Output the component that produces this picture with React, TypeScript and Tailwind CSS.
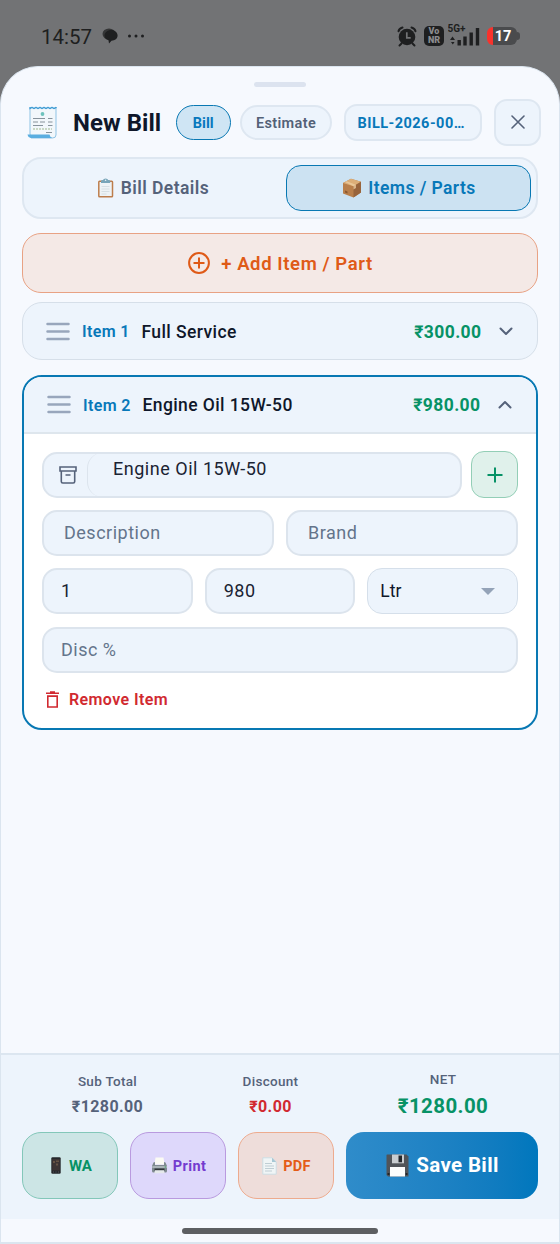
import type { ReactNode } from "react";

const ReceiptIcon = () => (
  <svg width="30" height="33" viewBox="0 0 30 33" className="shrink-0">
    <path d="M3 2.500 5 1 7 2.500 9 1 11 2.500 13 1 15 2.500 17 1 19 2.500 21 1 23 2.500 25 1 27 2.500 29 1V29Q29 32 25.500 32H4L3 28Z" fill="#f2f7fb" stroke="#8fc3e4" strokeWidth="1" />
    <path d="M3 1v1.500l2-1 2 1 2-1 2 1 2-1 2 1 2-1 2 1 2-1 2 1 2-1 2 1 2-1V1" fill="none" stroke="#3d9bd3" strokeWidth="1.300" />
    <path d="M.5 28.500H22.500Q23 31.500 25.500 32H4Q1 31.500.5 28.500Z" fill="#5aaee0" />
    <circle cx="15.500" cy="8" r="1.900" fill="#6ec3bd" />
    <path d="M6 12.500h12M21 12.500h4.500M6 16h5M13 16h5M21 16h4.500M6 19.500h10M21 19.500h4.500M19 26.500h6" stroke="#87939c" strokeWidth="1.100" />
    <path d="M6 23h19" stroke="#9fb98d" strokeWidth="1" strokeDasharray="2 1" />
  </svg>
);

const ClipboardIcon = () => (
  <svg width="17" height="20" viewBox="0 0 17 20" className="shrink-0">
    <rect x="1.800" y="3.200" width="13.700" height="15.500" rx=".8" fill="#eef3f6" stroke="#bd7d4c" strokeWidth="1.500" />
    <path d="M4 5V3Q4 2 6 2Q6.500.4 8.600.4T11.200 2Q13.200 2 13.200 3V5Z" fill="#78a5b9" />
    <circle cx="8.600" cy="2.300" r=".8" fill="#e9f2f6" />
    <path d="M4.500 8.500h8M4.500 11h8M4.500 13.500h8M4.500 16h5" stroke="#cfd9df" strokeWidth=".8" />
  </svg>
);

const BoxIcon = () => (
  <svg width="20" height="20" viewBox="0 0 20 20" className="shrink-0">
    <path d="M1 5 9 .8 19 3.800V14.500L11.500 19.500 1 15.500Z" fill="#b97f4b" />
    <path d="M1 5 9 .8 19 3.800 11.500 8.300Z" fill="#dcae78" />
    <path d="M11.500 8.300 19 3.800V14.500L11.500 19.500Z" fill="#98643c" />
    <path d="M4.500 3.200 14 6.700V10l-2.500 1.500V8.300L3 4Z" fill="#edcfa3" opacity=".75" />
    <path d="m3 12.500 2.500 1v2l-2.500-1Z" fill="#89572f" />
  </svg>
);

const PhoneIcon = () => (
  <svg width="10" height="17" viewBox="0 0 10 17" className="shrink-0">
    <rect x=".3" y=".3" width="9.400" height="16.400" rx="1.200" fill="#25272b" />
    <rect x="1.200" y="2" width="7.600" height="11.500" fill="#3d3434" />
    <path d="M2 4h2v2H2zM5 3.500h3v1.500H5zM5 6.500h2v2H5z" fill="#665344" />
    <path d="M2 15h1M4.500 15h1M7 15h1" stroke="#62666b" strokeWidth=".8" />
  </svg>
);

const PrinterIcon = () => (
  <svg width="17" height="17" viewBox="0 0 17 17" className="shrink-0">
    <path d="M4.500.5h8l1 7h-10Z" fill="#fbfbf4" />
    <path d="M2.500 5.500 4 5v3h9V5l1.500.5L16 9v5q0 1.500-1.500 1.500h-12Q1 15.500 1 14V9Z" fill="#7f8a90" />
    <path d="M1.200 9h14.600v2H1.200Z" fill="#a9b3b7" />
    <path d="M3.500 11.500h10v2.200h-10Z" fill="#303539" />
    <path d="M4 13.200h9l.7 3H3.300Z" fill="#e5e9eb" />
    <circle cx="14.300" cy="10" r=".7" fill="#45a36b" />
  </svg>
);

const PageIcon = () => (
  <svg width="15" height="18" viewBox="0 0 15 18" className="shrink-0">
    <path d="M.8.800H10L14.200 5V17.200H.8Z" fill="#f0f5f6" stroke="#c5dce4" strokeWidth=".8" />
    <path d="M10 .8V5h4.200Z" fill="#a7c7d4" />
    <path d="M3 6.500h7M3 9h9M3 11.500h9M3 14h7" stroke="#b9c9d0" strokeWidth=".9" />
  </svg>
);

const FloppyIcon = () => (
  <svg width="23" height="23" viewBox="0 0 23 23" className="shrink-0">
    <path d="M1 .5h19.500L22.500 2.500V22.500H2L.5 21V1Z" fill="#505459" />
    <path d="M6 .5h12v8.800H6Z" fill="#c9cdd0" />
    <path d="M12.500 1.500H16v6.800h-3.500Z" fill="#23272c" />
    <path d="M4 13h15v9.500H4Z" fill="#fcfdfd" />
    <path d="M1.500 19h2v2h-2zM19.700 19h1.800v2h-1.800z" fill="#222529" />
  </svg>
);

const StatusBar = () => (
  <div className="flex h-[66px] items-center justify-between pt-1.5 pl-[41px] pr-10 text-[#1e1f20]">
    <div className="flex items-center">
      <span className="w-[51px] pt-0.5 text-[20.5px] whitespace-nowrap">14:57</span>
      <svg width="17" height="16" viewBox="0 0 17 16" className="ml-2.5">
        <ellipse cx="7" cy="6" rx="6.500" ry="5.500" fill="#343536" />
        <path d="M9.300 2C13 2 15.600 4.500 15.600 7.500S13 12.500 9.500 12.800L7 15.500 6.500 12.300C4 11.500 2.500 9.700 2.500 7.500 2.500 4.500 5.500 2 9.300 2Z" fill="#1e1f20" />
      </svg>
      <svg width="18" height="4" viewBox="0 0 18 4" className="ml-2">
        <circle cx="2.500" cy="2" r="1.500" fill="currentColor" />
        <circle cx="9" cy="2" r="1.500" fill="currentColor" />
        <circle cx="15.500" cy="2" r="1.500" fill="currentColor" />
      </svg>
    </div>
    <div className="flex items-center">
      <svg width="20" height="21" viewBox="0 0 19 21">
        <circle cx="9.500" cy="11" r="8.300" fill="currentColor" />
        <path d="M1 5.300Q1.500 2.500 5 1.500M18 5.300Q17.500 2.500 14 1.500M4 17.500l-2 2M15 17.500l2 2" stroke="currentColor" strokeWidth="2" strokeLinecap="round" fill="none" />
        <path d="M9.300 6.200v5.600h3.900" stroke="#727375" strokeWidth="1.700" fill="none" />
      </svg>
      <div className="ml-[7px] flex h-5 w-5 flex-col items-center justify-center rounded-[5px] bg-[#1e1f20] text-[9px] leading-[9px] font-black text-[#8b8c8e]">
        <span>Vo</span>
        <span>NR</span>
      </div>
      <svg width="33" height="23" viewBox="0 0 33 23" className="mb-0.5 ml-1">
        <text x="-.5" y="8" fontSize="10" fontWeight="700" fill="currentColor">5G+</text>
        <path d="M9.500 16h3.400v5.500H9.500zM15.300 12.500h3.400v9h-3.400zM21.500 8.500h3.400v13h-3.400zM27.800 4h3.400v17.500h-3.400zM2 16l2.500-3.500L7 16zM3 18h3.500l-1.700 2.500z" fill="currentColor" />
      </svg>
      <div className="ml-1.5 flex items-center">
        <div className="flex h-[18px] w-[30px] items-center justify-center overflow-hidden rounded-[6px] bg-linear-to-r from-[#f9322c] from-20% to-[#4a4b4d] to-20% pt-px pl-0.5 text-[14.500px] font-bold text-white">
          17
        </div>
        <div className="h-2 w-[3px] rounded-r-full bg-[#4a4b4d]" />
      </div>
    </div>
  </div>
);

const Header = () => (
  <div className="mt-[11px] flex h-12 items-center pr-[18px] pl-[26px]">
    <ReceiptIcon />
    <h1 className="ml-4 w-[89px] pt-0.5 text-[24px] font-bold tracking-[0.050px] whitespace-nowrap text-[#0f172a]">
      New Bill
    </h1>
    <button className="mt-px ml-[14px] h-[35px] w-[55px] rounded-full border-[1.500px] border-[#0878b3] bg-[#cfe5f4] pt-0.5 text-[14.500px] font-bold text-[#0878bd]">
      Bill
    </button>
    <button className="mt-px ml-[9px] h-[35px] w-[93px] rounded-full border-2 border-[#dee7f1] bg-[#edf4fc] pt-0.5 text-[14.500px] font-semibold tracking-[0.350px] text-[#536177]">
      Estimate
    </button>
    <div className="mt-px ml-3 flex h-[37px] w-[138px] items-center rounded-[13px] border-2 border-[#dee7f1] bg-[#edf4fc] pt-0.5 pl-[11px] text-[14.500px] font-bold tracking-[0.480px] whitespace-nowrap text-[#0878b9]">
      BILL-2026-00…
    </div>
    <button className="ml-3 flex h-[47px] w-[47px] items-center justify-center rounded-[13px] border-2 border-[#dee7f1] bg-[#edf4fc]">
      <svg width="14" height="14" viewBox="0 0 14 14" stroke="#55627a" strokeWidth="1.600" strokeLinecap="round">
        <path d="m1 1 12 12M13 1 1 13" />
      </svg>
    </button>
  </div>
);

const Tabs = () => (
  <div className="mx-[21px] mt-[11px] flex h-[62px] rounded-[19px] border-2 border-[#dee7f1] bg-[#edf4fc] p-[6px] pr-[5px]">
    <button className="mr-[10px] flex flex-1 items-center justify-center gap-[7px] text-[17.500px] font-semibold tracking-[0.420px] text-[#55627a]">
      <ClipboardIcon />
      <span className="pt-px">Bill Details</span>
    </button>
    <button className="flex h-[46px] w-[245px] items-center justify-center gap-[6px] rounded-[15px] border-[1.500px] border-[#0878b3] bg-[#cce2f2] pl-px text-[17.500px] font-semibold tracking-[0.420px] text-[#0878b9]">
      <BoxIcon />
      <span className="pt-px">Items / Parts</span>
    </button>
  </div>
);

type ItemHeaderProps = {
  label: string;
  name: string;
  price: string;
  open?: boolean;
};

const ItemHeader = ({ label, name, price, open }: ItemHeaderProps) => (
  <div className="flex h-full items-center px-[23px]">
    <svg width="24" height="19" viewBox="0 0 24 19" stroke="#98a6bc" strokeWidth="2.500" strokeLinecap="round">
      <path d="M1.500 2h21M1.500 9.500h21M1.500 17h21" />
    </svg>
    <span className="ml-3 w-[59.500px] pt-0.5 text-[16px] font-semibold tracking-[0.350px] whitespace-nowrap text-[#0878b9]">
      {label}
    </span>
    <span className="pt-0.5 text-[17.500px] font-medium tracking-[0.400px] whitespace-nowrap text-[#0f172a]">{name}</span>
    <span className="ml-auto pt-0.5 text-[17.500px] font-bold tracking-[0.400px] text-[#079266]">{price}</span>
    <svg
      width="14"
      height="9"
      viewBox="0 0 14 9"
      className={open ? "mr-px ml-[17.500px] rotate-180" : "mr-px ml-[17.500px]"}
      fill="none"
      stroke="#55627a"
      strokeWidth="2"
      strokeLinecap="round"
      strokeLinejoin="round"
    >
      <path d="m1.500 1.500 5.500 5.500 5.500-5.500" />
    </svg>
  </div>
);

const Field = ({ children, className }: { children: ReactNode; className?: string }) => (
  <div
    className={`flex h-[46px] items-center rounded-[15px] border-2 border-[#dce4ed] bg-[#edf4fc] pb-0.5 text-[18px] tracking-[0.500px] ${className ?? ""}`}
  >
    {children}
  </div>
);

const ItemForm = () => (
  <div className="px-[18px] pt-[17px]">
    <div className="flex gap-[9px]">
      <div className="mt-px flex h-[46px] flex-1 items-center rounded-[15px] border-2 border-[#dce4ed] bg-[#edf4fc]">
        <svg width="18" height="18" viewBox="0 0 18 18" className="ml-[15px]" fill="none" stroke="#55627a" strokeWidth="1.600">
          <path d="M1 1h16v4H1zM2.300 5v10.500q0 1.500 1.500 1.500h10.400q1.500 0 1.500-1.500V5M6.500 9h5" />
        </svg>
        <div className="ml-[10px] flex h-[44px] flex-1 rounded-[15px] border-l border-[#dce4ed] pt-0.5 pl-[25px] text-[18px] tracking-[0.520px] text-[#1a2333]">
          Engine Oil 15W-50
        </div>
      </div>
      <button className="flex h-[47px] w-[47px] items-center justify-center rounded-[13px] border-[1.500px] border-[#93ceb6] bg-[#e0f1eb]">
        <svg width="16" height="16" viewBox="0 0 16 16" stroke="#079266" strokeWidth="2">
          <path d="M8 .5v15M.5 8h15" />
        </svg>
      </button>
    </div>
    <div className="mt-3 grid grid-cols-2 gap-3 text-[#64748b]">
      <Field className="pl-[20px]">Description</Field>
      <Field className="pl-[20px]">Brand</Field>
    </div>
    <div className="mt-3 grid grid-cols-3 gap-3 text-[#1a2333]">
      <Field className="pl-[17px]">1</Field>
      <Field className="pl-[17px]">980</Field>
      <div className="flex h-[46px] items-center justify-between rounded-[15px] border-[1.500px] border-[#d5dfea] bg-[#edf4fc] pr-[22px] pl-[12px] text-[17.500px] text-[#0f172a]">
        Ltr
        <svg width="14" height="7" viewBox="0 0 14 7" fill="#94a3b8">
          <path d="M0 0h14L7 7z" />
        </svg>
      </div>
    </div>
    <Field className="mt-[13px] pl-[17px] text-[#64748b]">Disc %</Field>
    <button className="mt-[14px] ml-[4px] flex items-center gap-[10px] text-[16px] font-semibold tracking-[0.400px] text-[#d12930]">
      <svg width="13" height="17" viewBox="0 0 13 17" fill="none" stroke="currentColor" strokeWidth="1.600">
        <path d="M0 2.200h13M4 1h5M1.800 5.100h9.400V16H1.800z" />
      </svg>
      <span className="pt-px">Remove Item</span>
    </button>
  </div>
);

const Footer = () => (
  <footer className="h-[166px] border-t-2 border-[#dce6f0] bg-[#edf4fc] px-[21px] pt-[15px] text-center">
    <div className="flex h-[62px] text-[#55627a]">
      <div className="w-[171px] pt-px">
        <p className="text-[13.500px] leading-5 font-medium tracking-[0.300px]">Sub Total</p>
        <p className="mt-1 text-[16px] leading-6 font-bold tracking-[0.400px]">₹1280.00</p>
      </div>
      <div className="w-[155px] pt-px">
        <p className="text-[13.500px] leading-5 font-medium tracking-[0.300px]">Discount</p>
        <p className="mt-1 text-[16px] leading-6 font-bold tracking-[0.400px] text-[#d12930]">₹0.00</p>
      </div>
      <div className="flex-1">
        <p className="text-[13.500px] leading-[18px] font-medium tracking-[0.300px]">NET</p>
        <p className="mt-1 text-[20.500px] leading-[29px] font-bold tracking-[0.400px] text-[#079266]">₹1280.00</p>
      </div>
    </div>
    <div className="flex h-[67px] gap-3">
      <button className="flex w-24 items-center justify-center gap-[8px] rounded-[19px] border-[1.500px] border-[#83c7b9] bg-[#cce5e5] pl-[3px] text-[15px] font-bold text-[#079266]">
        <PhoneIcon />
        <span className="pt-0.5">WA</span>
      </button>
      <button className="flex w-24 items-center justify-center gap-[5px] rounded-[19px] border-[1.500px] border-[#b99adf] bg-[#ded8fb] pl-px text-[14.500px] font-bold tracking-[0.400px] text-[#743bcf]">
        <PrinterIcon />
        <span className="pt-0.5">Print</span>
      </button>
      <button className="flex w-24 items-center justify-center gap-[6px] rounded-[19px] border-[1.500px] border-[#edab8e] bg-[#eeddda] pl-px text-[14.500px] font-bold tracking-[0.200px] text-[#e45b17]">
        <PageIcon />
        <span className="pt-0.5">PDF</span>
      </button>
      <button className="flex flex-1 items-center justify-center gap-[7px] rounded-[18px] bg-linear-to-r from-[#2f8cca] to-[#0077bd] pl-px text-[20.500px] font-bold tracking-[0.350px] text-white">
        <FloppyIcon />
        Save Bill
      </button>
    </div>
  </footer>
);

const App = () => {
  return (
    <div className="flex h-[1244px] w-[560px] flex-col overflow-hidden bg-[#727375] font-[Roboto,'Noto_Sans',sans-serif]">
      <StatusBar />
      <main className="flex flex-1 flex-col overflow-hidden rounded-t-[38px] border border-b-2 border-[#dbe5ef] bg-[#f6f9fe]">
        <div className="mx-auto mt-[15px] h-[5px] w-[52px] shrink-0 rounded-full bg-[#dce3ef]" />
        <Header />
        <Tabs />
        <button className="mx-[21px] mt-[14px] flex h-[60px] items-center justify-center gap-[11px] rounded-[19px] border-[1.500px] border-[#e8a284] bg-[#f4e9e6] pl-px text-[18.500px] font-semibold tracking-[0.600px] text-[#df5a17]">
          <svg width="22" height="22" viewBox="0 0 22 22" fill="none" stroke="currentColor" strokeWidth="2">
            <circle cx="11" cy="11" r="9.900" />
            <path d="M11 5.500v11M5.500 11h11" />
          </svg>
          <span className="pt-[3px]">+ Add Item / Part</span>
        </button>
        <section className="mx-[21px] mt-[9px] h-[58px] rounded-[20px] border-[1.500px] border-[#d6dfe9] bg-[#edf4fc]">
          <ItemHeader label="Item 1" name="Full Service" price="₹300.00" />
        </section>
        <section className="mx-[21px] mt-[15px] h-[355px] overflow-hidden rounded-[20px] border-2 border-[#0878b3] bg-white">
          <div className="h-[57px] border-b-2 border-[#dee6ed] bg-[#edf4fc]">
            <ItemHeader label="Item 2" name="Engine Oil 15W-50" price="₹980.00" open />
          </div>
          <ItemForm />
        </section>
        <div className="flex-1" />
        <Footer />
        <div className="flex h-[23px] shrink-0 items-center justify-center">
          <div className="h-1.5 w-[196px] rounded-full bg-[#5d5f62]" />
        </div>
      </main>
    </div>
  );
};

export default App;
